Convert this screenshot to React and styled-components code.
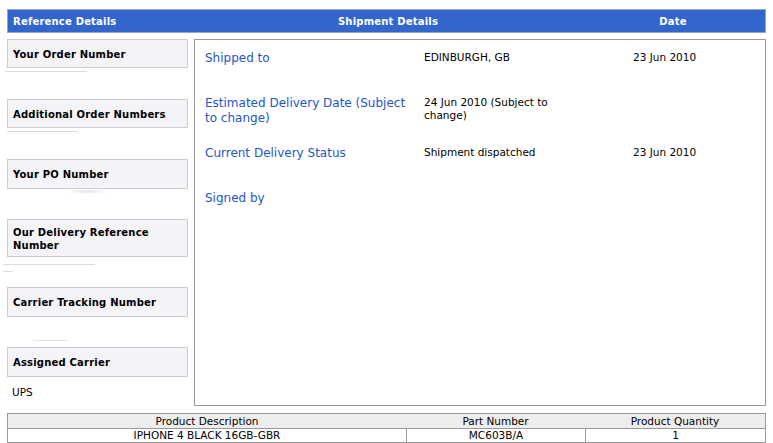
import React from "react";
import styled, { createGlobalStyle } from "styled-components";

const Global = createGlobalStyle`
  html, body { margin: 0; padding: 0; background: #fff; }
  body { font-family: "DejaVu Sans", "Lucida Grande", Verdana, sans-serif; color: #000; }
`;

const Page = styled.div`
  width: 759px;
  padding: 9px 0 0 7px;
  display: flex;
  flex-direction: column;
  gap: 6px;
`;

const HeaderBar = styled.div`
  display: grid;
  grid-template-columns: 187px 386px 1fr;
  height: 22px;
  align-items: center;
  background: #3366cc;
  border: 1px solid #9aa6bd;
  color: #fff;
  font-size: 10px;
  font-weight: bold;
  letter-spacing: 0.2px;
`;

const HeaderCell = styled.div`
  text-align: ${(p) => p.$align || "center"};
  padding-left: ${(p) => (p.$align === "left" ? "5px" : "0")};
`;

const Body = styled.div`
  display: flex;
  gap: 6px;
`;

const LeftCol = styled.div`
  width: 181px;
  display: flex;
  flex-direction: column;
`;

const Section = styled.div`
  display: flex;
  flex-direction: column;
  height: ${(p) => p.$h}px;
`;

const LabelBox = styled.div`
  box-sizing: border-box;
  height: ${(p) => p.$h}px;
  background: #f4f4f8;
  border: 1px solid #cdcdd2;
  padding: ${(p) => (p.$multi ? "6px 5px" : "8px 5px")};
  font-size: 10px;
  font-weight: bold;
  line-height: 13px;
  letter-spacing: 0.2px;
`;

const Trace = styled.div`
  height: 1px;
  width: ${(p) => p.$w}px;
  margin-left: ${(p) => p.$x}px;
  margin-top: ${(p) => p.$y}px;
  background: ${(p) => p.$c || "#dcdcdc"};
`;

const Smudge = styled.div`
  height: 5px;
  width: 40px;
  margin-left: 60px;
  background: radial-gradient(ellipse at center, #e4e4e4 0%, rgba(255,255,255,0) 70%);
`;

const CarrierValue = styled.div`
  font-size: 10.5px;
  padding: 9px 0 0 5px;
`;

const Panel = styled.div`
  flex: 1;
  box-sizing: border-box;
  height: 367px;
  border: 1px solid #9a9a9a;
  background: #fff;
  padding: 11px 0 0 10px;
`;

const InfoRow = styled.div`
  display: grid;
  grid-template-columns: 219px 209px 1fr;
  height: ${(p) => p.$h}px;
  align-items: start;
`;

const InfoLabel = styled.div`
  color: #2456c4;
  font-size: 12px;
  line-height: 15px;
  max-width: 205px;
`;

const InfoValue = styled.div`
  font-size: 10.5px;
  line-height: 13px;
  max-width: ${(p) => p.$max || 200}px;
`;

const Table = styled.div`
  border: 1px solid #9a9a9a;
  font-size: 10.5px;
`;

const TableHead = styled.div`
  display: grid;
  grid-template-columns: 398px 179px 1fr;
  background: #ededed;
  border-bottom: 1px solid #9a9a9a;
  height: 14px;
  line-height: 14px;
`;

const TableRow = styled.div`
  display: grid;
  grid-template-columns: 398px 179px 1fr;
  height: 13px;
  line-height: 13px;
`;

const Cell = styled.div`
  text-align: center;
  border-left: ${(p) => (p.$divide ? "1px solid #9a9a9a" : "none")};
`;

const sections = [
  { label: "Your Order Number", box: 29, h: 60, traces: [{ w: 82, x: -2, y: 3 }] },
  { label: "Additional Order Numbers", box: 29, h: 60, traces: [{ w: 71, x: 0, y: 3 }] },
  { label: "Your PO Number", box: 30, h: 60, smudge: true },
  { label: "Our Delivery Reference Number", box: 38, h: 68, multi: true, traces: [{ w: 92, x: -4, y: 7 }, { w: 10, x: -4, y: 6 }] },
  { label: "Carrier Tracking Number", box: 30, h: 60, traces: [{ w: 35, x: 26, y: 23, c: "#e2e2e2" }] },
  { label: "Assigned Carrier", box: 30, h: 60, value: "UPS" },
];

const rows = [
  { label: "Shipped to", value: "EDINBURGH, GB", date: "23 Jun 2010", h: 45 },
  { label: "Estimated Delivery Date (Subject to change)", value: "24 Jun 2010 (Subject to change)", date: "", h: 50, max: 135 },
  { label: "Current Delivery Status", value: "Shipment dispatched", date: "23 Jun 2010", h: 45 },
  { label: "Signed by", value: "", date: "", h: 45 },
];

export default function App() {
  return (
    <>
      <Global />
      <Page>
        <HeaderBar>
          <HeaderCell $align="left">Reference Details</HeaderCell>
          <HeaderCell>Shipment Details</HeaderCell>
          <HeaderCell>Date</HeaderCell>
        </HeaderBar>
        <Body>
          <LeftCol>
            {sections.map((s) => (
              <Section key={s.label} $h={s.h}>
                <LabelBox $h={s.box} $multi={s.multi}>{s.label}</LabelBox>
                {s.traces && s.traces.map((t, i) => <Trace key={i} $w={t.w} $x={t.x} $y={t.y} $c={t.c} />)}
                {s.smudge && <Smudge />}
                {s.value && <CarrierValue>{s.value}</CarrierValue>}
              </Section>
            ))}
          </LeftCol>
          <Panel>
            {rows.map((r) => (
              <InfoRow key={r.label} $h={r.h}>
                <InfoLabel>{r.label}</InfoLabel>
                <InfoValue $max={r.max}>{r.value}</InfoValue>
                <InfoValue>{r.date}</InfoValue>
              </InfoRow>
            ))}
          </Panel>
        </Body>
        <Table>
          <TableHead>
            <Cell>Product Description</Cell>
            <Cell>Part Number</Cell>
            <Cell>Product Quantity</Cell>
          </TableHead>
          <TableRow>
            <Cell>IPHONE 4 BLACK 16GB-GBR</Cell>
            <Cell $divide>MC603B/A</Cell>
            <Cell $divide>1</Cell>
          </TableRow>
        </Table>
      </Page>
    </>
  );
}
